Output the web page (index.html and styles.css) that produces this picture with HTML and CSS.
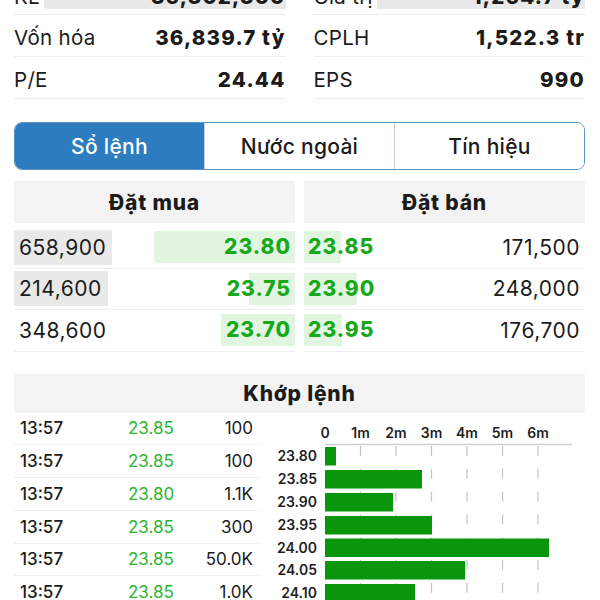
FILE: index.html
```html
<!DOCTYPE html>
<html lang="vi">
<head>
    <meta charset="UTF-8">
    <meta name="viewport" content="width=device-width, initial-scale=1.0">
    <title>Chi tiết cổ phiếu</title>
    <link rel="stylesheet" href="styles.css">
</head>
<body>
    <div class="page">
        <!-- Chỉ số cơ bản -->
        <section class="stats">
            <div class="stat-col">
                <div class="stat-row cut">
                    <span class="label">KL</span>
                    <span class="value flash">36,302,300</span>
                </div>
                <div class="stat-row">
                    <span class="label">Vốn hóa</span>
                    <span class="value">36,839.7 tỷ</span>
                </div>
                <div class="stat-row">
                    <span class="label">P/E</span>
                    <span class="value">24.44</span>
                </div>
            </div>
            <div class="stat-col">
                <div class="stat-row cut">
                    <span class="label">Giá trị</span>
                    <span class="value flash">1,264.7 tỷ</span>
                </div>
                <div class="stat-row">
                    <span class="label">CPLH</span>
                    <span class="value">1,522.3 tr</span>
                </div>
                <div class="stat-row">
                    <span class="label">EPS</span>
                    <span class="value">990</span>
                </div>
            </div>
        </section>

        <!-- Tabs -->
        <nav class="tabs">
            <button class="tab active">Sổ lệnh</button>
            <button class="tab">Nước ngoài</button>
            <button class="tab">Tín hiệu</button>
        </nav>

        <!-- Sổ lệnh -->
        <section class="book">
            <div class="book-col">
                <div class="section-head">Đặt mua</div>
                <div class="book-row">
                    <span class="vol hot">658,900</span>
                    <span class="price buy" style="background-size: 141px 100%">23.80</span>
                </div>
                <div class="book-row">
                    <span class="vol hot">214,600</span>
                    <span class="price buy" style="background-size: 46px 100%">23.75</span>
                </div>
                <div class="book-row">
                    <span class="vol">348,600</span>
                    <span class="price buy" style="background-size: 74px 100%">23.70</span>
                </div>
            </div>
            <div class="book-col">
                <div class="section-head">Đặt bán</div>
                <div class="book-row">
                    <span class="price sell" style="background-size: 37px 100%">23.85</span>
                    <span class="vol">171,500</span>
                </div>
                <div class="book-row">
                    <span class="price sell" style="background-size: 53px 100%">23.90</span>
                    <span class="vol">248,000</span>
                </div>
                <div class="book-row">
                    <span class="price sell" style="background-size: 38px 100%">23.95</span>
                    <span class="vol">176,700</span>
                </div>
            </div>
        </section>

        <!-- Khớp lệnh -->
        <section class="match">
            <div class="section-head">Khớp lệnh</div>
            <div class="match-body">
                <div class="trades">
                    <div class="trade"><span class="time">13:57</span><span class="t-price">23.85</span><span class="t-vol">100</span></div>
                    <div class="trade"><span class="time">13:57</span><span class="t-price">23.85</span><span class="t-vol">100</span></div>
                    <div class="trade"><span class="time">13:57</span><span class="t-price">23.80</span><span class="t-vol">1.1K</span></div>
                    <div class="trade"><span class="time">13:57</span><span class="t-price">23.85</span><span class="t-vol">300</span></div>
                    <div class="trade"><span class="time">13:57</span><span class="t-price">23.85</span><span class="t-vol">50.0K</span></div>
                    <div class="trade"><span class="time">13:57</span><span class="t-price">23.85</span><span class="t-vol">1.0K</span></div>
                </div>
                <svg class="chart" width="315" height="190" viewBox="0 0 315 190">
                    <g class="axis-text" text-anchor="middle">
                        <text x="55" y="25">0</text>
                        <text x="90.5" y="25">1m</text>
                        <text x="126" y="25">2m</text>
                        <text x="161.5" y="25">3m</text>
                        <text x="197" y="25">4m</text>
                        <text x="232.5" y="25">5m</text>
                        <text x="268" y="25">6m</text>
                    </g>
                    <line class="axis" x1="55" y1="31.5" x2="302" y2="31.5"/>
                    <g class="grid">
                        <line x1="90.5" y1="33" x2="90.5" y2="190"/>
                        <line x1="126" y1="33" x2="126" y2="190"/>
                        <line x1="161.5" y1="33" x2="161.5" y2="190"/>
                        <line x1="197" y1="33" x2="197" y2="190"/>
                        <line x1="232.5" y1="33" x2="232.5" y2="190"/>
                        <line x1="268" y1="33" x2="268" y2="190"/>
                    </g>
                    <g class="bars">
                        <rect x="55" y="34" width="11" height="18.5"/>
                        <rect x="55" y="57" width="97" height="18.5"/>
                        <rect x="55" y="80" width="68" height="18.5"/>
                        <rect x="55" y="103" width="107" height="18.5"/>
                        <rect x="55" y="125.5" width="224" height="18.5"/>
                        <rect x="55" y="148" width="140" height="18.5"/>
                        <rect x="55" y="171" width="90" height="18.5"/>
                    </g>
                    <g class="bar-labels" text-anchor="end">
                        <text x="47" y="48">23.80</text>
                        <text x="47" y="71">23.85</text>
                        <text x="47" y="94">23.90</text>
                        <text x="47" y="117">23.95</text>
                        <text x="47" y="139.5">24.00</text>
                        <text x="47" y="162">24.05</text>
                        <text x="47" y="185">24.10</text>
                    </g>
                </svg>
            </div>
        </section>
    </div>
</body>
</html>
```

FILE: styles.css
```css
html, body {
    margin: 0;
    padding: 0;
    height: 100%;
    overflow: hidden;
    background: #fff;
}
body {
    font-family: Inter, "Noto Sans", sans-serif;
    color: #1b1b1b;
}
.page {
    padding: 0 15px 0 14px;
}

/* stats */
.stats {
    display: grid;
    grid-template-columns: 1fr 1fr;
    column-gap: 28px;
    margin-top: -22px;
}
.stat-row {
    display: flex;
    align-items: center;
    justify-content: space-between;
    height: 42px;
    padding-top: 3px;
    box-sizing: border-box;
    border-bottom: 1px solid #ececec;
    font-size: 20.5px;
}
.stat-row.cut {
    height: 37px;
    padding-top: 0;
}
.label {
    white-space: nowrap;
    letter-spacing: 0.3px;
}
.value {
    font-weight: 800;
    letter-spacing: 1.2px;
    white-space: nowrap;
}
.value.flash {
    flex: 1;
    margin-left: 4px;
    text-align: right;
    background: #e9e9e9;
}

/* tabs */
.tabs {
    display: flex;
    margin-top: 23px;
    height: 46px;
    border: 1px solid #5f93c4;
    border-radius: 8px;
    overflow: hidden;
}
.tab {
    flex: 1;
    border: none;
    border-left: 1px solid #c9d2db;
    background: #fff;
    color: #1b1b1b;
    font-family: inherit;
    font-size: 21px;
    font-weight: 500;
    letter-spacing: 0.3px;
    padding: 0;
    cursor: pointer;
}
.tab:first-child {
    border-left: none;
}
.tab.active {
    background: #2d7cbf;
    color: #fff;
}

/* headers */
.section-head {
    display: flex;
    align-items: center;
    justify-content: center;
    background: #f3f3f3;
    font-size: 21px;
    font-weight: 800;
    letter-spacing: 0.8px;
}

/* order book */
.book {
    display: grid;
    grid-template-columns: 1fr 1fr;
    column-gap: 9px;
    margin-top: 11px;
}
.book .section-head {
    height: 42px;
    margin-bottom: 4px;
}
.book-row {
    display: flex;
    align-items: center;
    height: 41.5px;
    box-sizing: border-box;
    border-bottom: 1px solid #efefef;
    font-size: 21px;
}
.vol {
    padding: 0 6px 0 5px;
    line-height: 35px;
    letter-spacing: 0.5px;
}
.vol.hot {
    background: #e9e9e9;
}
.book-col:last-child .vol {
    margin-left: auto;
    padding-right: 5px;
}
.price {
    flex: 1;
    line-height: 32px;
    font-weight: 800;
    color: #17a91a;
    letter-spacing: 1px;
    background-image: linear-gradient(#e1f5e1, #e1f5e1);
    background-repeat: no-repeat;
}
.price.buy {
    text-align: right;
    padding-right: 4px;
    background-position: right center;
}
.price.sell {
    flex: 0 0 auto;
    width: 130px;
    padding-left: 4px;
    background-position: left center;
}

/* khớp lệnh */
.match {
    margin-top: 22px;
}
.match .section-head {
    height: 39px;
}
.match-body {
    display: grid;
    grid-template-columns: 246px 1fr;
    column-gap: 10px;
}
.trade {
    display: grid;
    grid-template-columns: 108px 1fr auto;
    align-items: center;
    height: 32.75px;
    box-sizing: border-box;
    padding: 0 7px 0 6px;
    border-bottom: 1px solid #efefef;
    font-size: 17px;
}
.time {
    font-weight: 500;
}
.t-price {
    color: #2eb52e;
}
.t-vol {
    text-align: right;
}
.chart {
    display: block;
    font-family: Inter, "Noto Sans", sans-serif;
}
.axis-text text,
.bar-labels text {
    font-size: 14px;
    font-weight: 600;
    fill: #1f1f1f;
}
.axis {
    stroke: #cfcfcf;
    stroke-width: 1.5;
}
.grid line {
    stroke: #c4c4c4;
    stroke-width: 1.2;
    stroke-dasharray: 10 12.8;
}
.bars rect {
    fill: #0a960a;
}
```
